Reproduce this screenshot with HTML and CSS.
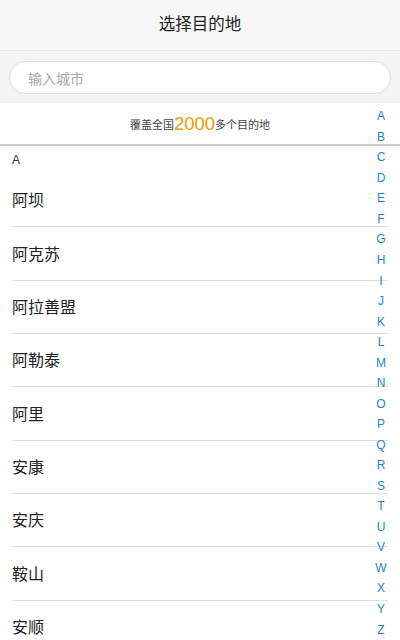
FILE: index.html
```html
<!DOCTYPE html>
<html lang="zh">
<head>
<meta charset="utf-8">
<link rel="stylesheet" href="styles.css">
</head>
<body>
<div class="page">
  <header class="topbar">选择目的地</header>
  <div class="search-area">
    <div class="search-box">输入城市</div>
  </div>
  <div class="banner">覆盖全国<span class="num">2000</span>多个目的地</div>
  <div class="list">
    <div class="section-title">A</div>
    <div class="item">阿坝</div>
    <div class="item">阿克苏</div>
    <div class="item">阿拉善盟</div>
    <div class="item">阿勒泰</div>
    <div class="item">阿里</div>
    <div class="item">安康</div>
    <div class="item">安庆</div>
    <div class="item">鞍山</div>
    <div class="item">安顺</div>
  </div>
  <nav class="index">
    <span>A</span><span>B</span><span>C</span><span>D</span><span>E</span><span>F</span><span>G</span><span>H</span><span>I</span><span>J</span><span>K</span><span>L</span><span>M</span><span>N</span><span>O</span><span>P</span><span>Q</span><span>R</span><span>S</span><span>T</span><span>U</span><span>V</span><span>W</span><span>X</span><span>Y</span><span>Z</span>
  </nav>
</div>
</body>
</html>
```
FILE: styles.css
```css
html, body {
  margin: 0;
  padding: 0;
  background: #ffffff;
}
body {
  font-family: "Noto Sans CJK SC", "Liberation Sans", sans-serif;
  color: #333333;
  overflow: hidden;
}
.page {
  position: relative;
  width: 400px;
  height: 640px;
  overflow: hidden;
}
.topbar {
  height: 46px;
  padding-bottom: 4px;
  background: #f7f7f7;
  border-bottom: 1px solid #e8e8e8;
  display: flex;
  align-items: center;
  justify-content: center;
  font-size: 16.5px;
  color: #222222;
}
.search-area {
  background: #f4f4f4;
  padding: 10px 9px 9px;
}
.search-box {
  height: 31px;
  border: 1px solid #e2e2e2;
  border-radius: 17px;
  background: #ffffff;
  display: flex;
  align-items: center;
  padding-left: 18px;
  font-size: 14px;
  color: #a8a8a8;
}
.banner {
  height: 41px;
  border-bottom: 2px solid #cccccc;
  display: flex;
  align-items: center;
  justify-content: center;
  font-size: 11px;
  color: #444444;
}
.banner .num {
  font-family: "Liberation Sans", sans-serif;
  font-size: 18.5px;
  color: #f39800;
}
.section-title {
  height: 28px;
  display: flex;
  align-items: center;
  padding-left: 12px;
  font-family: "Liberation Sans", sans-serif;
  font-size: 12px;
  color: #333333;
}
.item {
  height: 50.35px;
  padding-bottom: 2px;
  margin: 0 12px;
  border-bottom: 1px solid #e0e0e0;
  display: flex;
  align-items: center;
  font-size: 16px;
  color: #222222;
}
.index {
  position: absolute;
  right: 11px;
  top: 106px;
  height: 534px;
  width: 16px;
  display: flex;
  flex-direction: column;
  justify-content: space-around;
  align-items: center;
  font-family: "Liberation Sans", sans-serif;
  font-size: 12px;
  color: #1a86d0;
}
.index span {
  line-height: 1;
}
```
